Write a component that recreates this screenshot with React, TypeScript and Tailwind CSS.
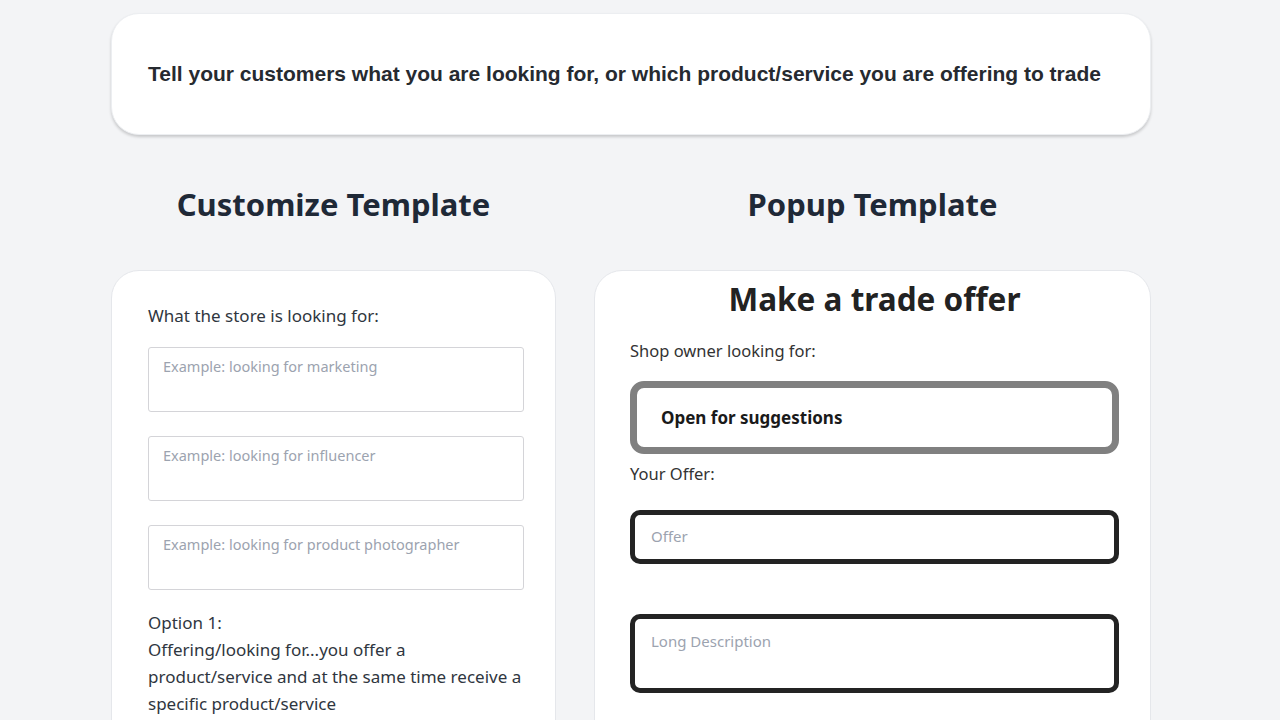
import React from 'react';

const sans = "font-['Noto_Sans','Open_Sans',sans-serif]";

function ExampleInput({ placeholder }: { placeholder: string }) {
  return (
    <textarea
      placeholder={placeholder}
      className="block h-[65px] w-full resize-none rounded-[3px] border border-[#d4d4d8] bg-white px-[14px] py-[8px] text-[14.5px] text-gray-700 placeholder:text-[#9ca3af] focus:outline-none"
    />
  );
}

export default function App() {
  return (
    <div className={`min-h-screen bg-[#f3f4f6] pt-[13px] ${sans}`}>
      <div className="ml-[111px] w-[1040px]">
        <div className="flex h-[122px] items-center rounded-[28px] border border-[#eceef1] bg-white px-[36px] shadow-[0_2px_3px_rgba(0,0,0,0.18)]">
          <p className="font-['Liberation_Sans',Arial,sans-serif] text-[21px] font-bold text-[#262a30]">
            Tell your customers what you are looking for, or which product/service you are offering to trade
          </p>
        </div>

        <div className="mt-[45px] flex gap-[38px]">
          <div className="w-[445px] shrink-0">
            <h2 className="flex h-[48px] items-center justify-center text-[31px] font-bold text-[#1f2937]">
              Customize Template
            </h2>
            <div className="mt-[42px] h-[600px] rounded-t-[28px] border border-[#e5e7eb] bg-white pl-[36px] pr-[31px] pt-[32px]">
              <p className="text-[17px] leading-[26px] text-[#2f3640]">What the store is looking for:</p>
              <div className="mt-[18px] flex flex-col gap-[24px]">
                <ExampleInput placeholder="Example: looking for marketing" />
                <ExampleInput placeholder="Example: looking for influencer" />
                <ExampleInput placeholder="Example: looking for product photographer" />
              </div>
              <div className="mt-[19px] text-[17px] leading-[27px] text-[#2f3640]">
                <p>Option 1:</p>
                <p>Offering/looking for...you offer a product/service and at the same time receive a specific product/service</p>
              </div>
            </div>
          </div>

          <div className="w-[557px] shrink-0">
            <h2 className="flex h-[48px] items-center justify-center text-[31px] font-bold text-[#1f2937]">
              Popup Template
            </h2>
            <div className="mt-[42px] h-[600px] rounded-t-[28px] border border-[#e5e7eb] bg-white pl-[35px] pr-[31px] pt-[6px]">
              <h3 className="text-center text-[31.5px] font-bold leading-[44px] text-[#222]">Make a trade offer</h3>
              <p className="mt-[18px] text-[16.5px] leading-[24px] text-[#333]">Shop owner looking for:</p>
              <div className="mt-[18px] flex h-[73px] items-center rounded-[14px] border-[7px] border-[#808080] px-[24px]">
                <span className="text-[17px] font-bold text-[#1a1a1a]">Open for suggestions</span>
              </div>
              <p className="mt-[8px] text-[16.5px] leading-[24px] text-[#333]">Your Offer:</p>
              <input
                placeholder="Offer"
                className="mt-[24px] block h-[54px] w-full rounded-[10px] border-[5px] border-[#232323] px-[16px] pb-[3px] text-[15px] placeholder:text-[#9ca3af] focus:outline-none"
              />
              <textarea
                placeholder="Long Description"
                className="mt-[50px] block h-[79px] w-full resize-none rounded-[10px] border-[5px] border-[#232323] px-[16px] py-[11px] text-[15px] placeholder:text-[#9ca3af] focus:outline-none"
              />
            </div>
          </div>
        </div>
      </div>
    </div>
  );
}
